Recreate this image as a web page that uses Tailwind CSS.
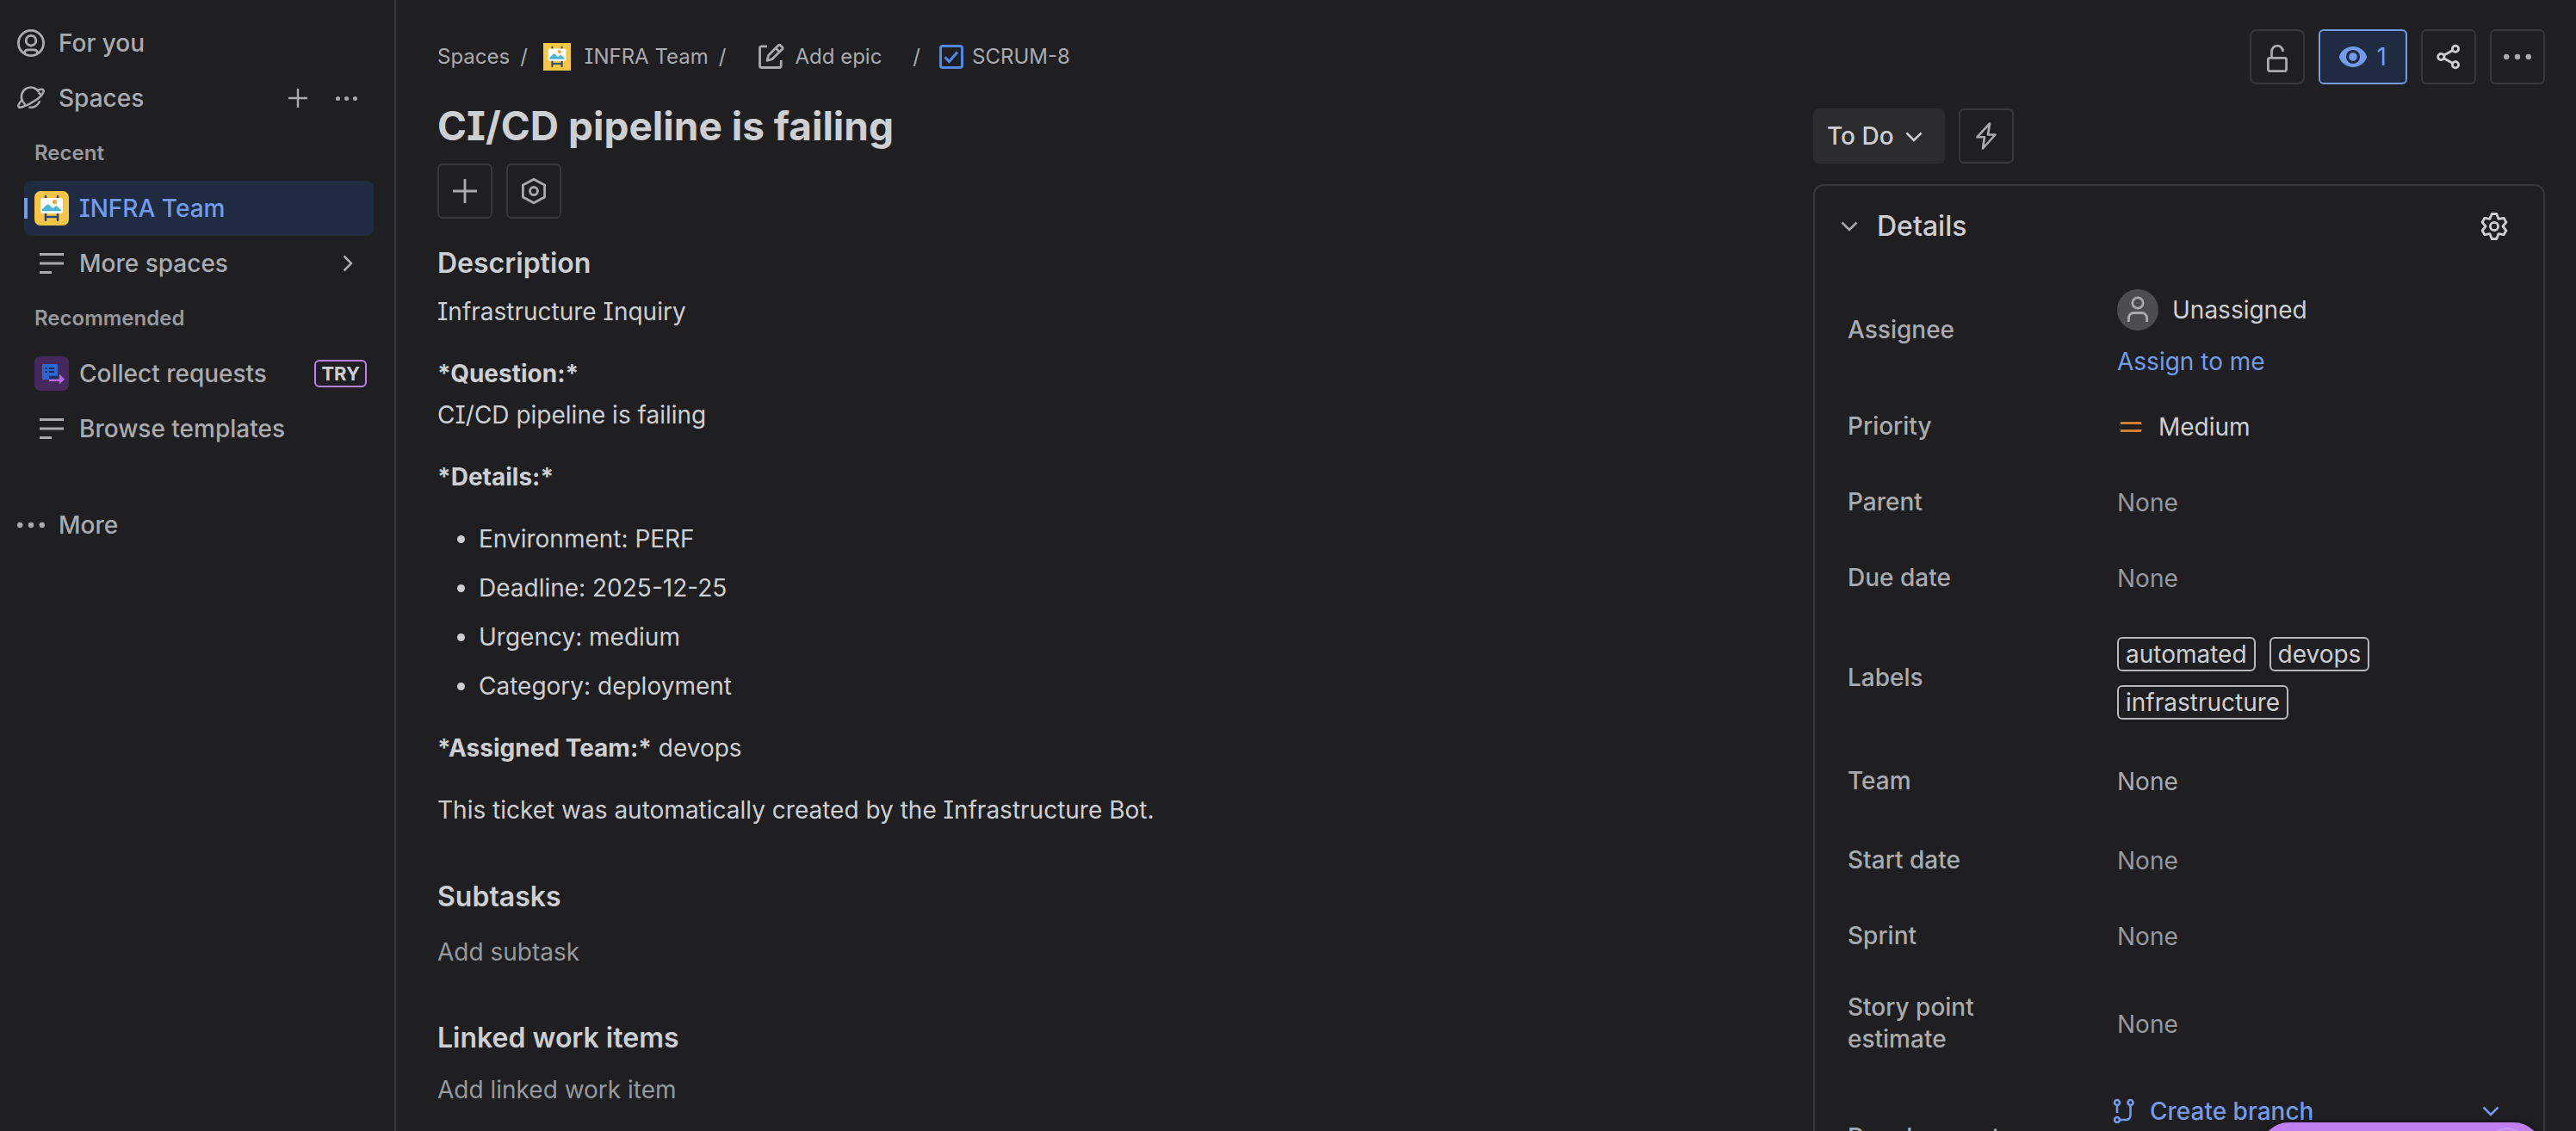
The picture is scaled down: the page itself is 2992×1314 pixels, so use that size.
<!DOCTYPE html>
<html lang="en">
<head>
    <meta charset="UTF-8">
    <meta name="viewport" content="width=device-width, initial-scale=1.0">
    <title>SCRUM-8 CI/CD pipeline is failing</title>
    <script src="https://cdn.jsdelivr.net/npm/@tailwindcss/browser@4"></script>
    <style>
        body {
            font-family: Inter, 'Liberation Sans', sans-serif;
            font-feature-settings: 'cv08';
        }
    </style>
</head>
<body class="flex h-screen overflow-hidden bg-[#1f1f21] text-[28px] leading-10 text-[#cecfd2]">

    <!-- Shared icons -->
    <svg class="hidden" aria-hidden="true">
        <symbol id="infra" viewBox="0 0 40 40">
            <rect width="40" height="40" fill="#f8c645"/>
            <path d="M13 6v4M27 6v4M13 24v10M27 24v10M13 30h14" stroke="#2c4a7c" stroke-width="2.6" stroke-linecap="round"/>
            <rect x="7" y="8" width="26" height="18" rx="2.5" fill="#fff"/>
            <circle cx="23.5" cy="12.6" r="2.6" fill="#f6a637"/>
            <path d="M9 23.3v-2.2l5.6-5.3c.7-.7 1.5-.7 2.2 0l4.7 4.5 2.6-2.6c.6-.6 1.5-.6 2.1 0l4.8 4.4v1.2z" fill="#4db5d8"/>
        </symbol>
        <symbol id="dots" viewBox="0 0 32 32">
            <g fill="currentColor"><circle cx="3.2" cy="16" r="3.2"/><circle cx="16" cy="16" r="3.2"/><circle cx="28.8" cy="16" r="3.2"/></g>
        </symbol>
        <symbol id="lines" viewBox="0 0 28 24">
            <path d="M0 1.5h28M0 12h28M0 22.5h14" stroke="currentColor" stroke-width="3"/>
        </symbol>
        <symbol id="chevron" viewBox="0 0 20 12">
            <path d="M1.5 1.5 10 10l8.5-8.5" fill="none" stroke="currentColor" stroke-width="2.5"/>
        </symbol>
    </svg>

    <!-- Sidebar -->
    <nav class="w-[460px] shrink-0 border-r-2 border-[#37383a] pt-[18px] font-medium text-[#a9abaf]">
        <a href="#" class="flex h-16 items-center gap-4 pl-5">
            <svg class="size-8" viewBox="0 0 32 32" fill="none" stroke="currentColor" stroke-width="2.8"><circle cx="16" cy="16" r="14.6"/><circle cx="16" cy="13.2" r="5.8"/><path d="M8.5 28v-.5a4 4 0 0 1 4-3.6h7a4 4 0 0 1 4 3.6v.5"/></svg>
            For you
        </a>
        <div class="flex h-16 items-center pl-5 pr-8">
            <a href="#" class="flex flex-1 items-center gap-4">
                <svg class="size-8" viewBox="0 0 32 32" fill="none" stroke="currentColor" stroke-width="2.5" stroke-linejoin="round"><path d="M6.2 19.5A10.4 10.4 0 0 1 25 9"/><path d="M23.5 6.4 28.3 5.8c2-.1 2.7 1.2 2.1 3C28.5 14.5 17 22.7 6 26.3c-3.6 1.1-5.2.2-4.5-2.2.8-2.4 2.6-4.4 4.7-6.6"/><path d="M24.8 9.5 27.3 12M6.2 19.5l3 4.3"/><path d="M26.2 19.2a11 11 0 0 1-12.7 7.4"/></svg>
                Spaces
            </a>
            <button type="button" aria-label="Create space" class="flex size-12 items-center justify-center"><svg class="size-[22px]" viewBox="0 0 22 22" stroke="currentColor" stroke-width="2.4"><path d="M11 0v22M0 11h22"/></svg></button>
            <button type="button" aria-label="More actions for spaces" class="ml-2 flex size-12 items-center justify-center"><svg class="size-[25px]"><use href="#dots"/></svg></button>
        </div>
        <h2 class="flex h-16 items-center pl-10 text-2xl font-semibold text-[#96999e]">Recent</h2>
        <a href="#" aria-current="page" class="relative ml-7 mr-6 flex h-16 items-center gap-3 rounded-lg bg-[#1f2b41] pl-3 text-[#729ceb]">
            <span class="absolute left-0 top-5 h-6 w-1 bg-[#729ceb]"></span>
            <svg class="size-10 rounded-[7px]"><use href="#infra"/></svg>
            INFRA Team
        </a>
        <a href="#" class="ml-7 mr-6 flex h-16 items-center pl-[18px] pr-5">
            <svg class="h-6 w-7"><use href="#lines"/></svg>
            <span class="ml-[18px] flex-1">More spaces</span>
            <svg class="h-3 w-5 -rotate-90"><use href="#chevron"/></svg>
        </a>
        <h2 class="flex h-16 items-center pl-10 text-2xl font-semibold text-[#96999e]">Recommended</h2>
        <a href="#" class="ml-7 mr-6 flex h-16 items-center gap-3 pl-3 pr-2">
            <svg class="size-10 rounded-[7px]" viewBox="0 0 40 40"><rect width="40" height="40" fill="#46285c"/><path d="M9 9h18v18H9z" fill="#2e67d3"/><path d="M17 22.8h10V27H17z" fill="#1c2f5c"/><path d="M12.5 14h2.4M17 14h6M12.5 18h2.4M17 18h6" stroke="#1c2f5c" stroke-width="2"/><path d="M17 26.5h12v-6l6 6.2-6 5.8V29H17z" fill="#b669f0"/></svg>
            <span class="flex-1">Collect requests</span>
            <span class="flex h-8 items-center rounded-md border-2 border-[#bf7ff0] px-[6px] text-[22px] font-bold text-[#cecfd2]">TRY</span>
        </a>
        <a href="#" class="ml-7 mr-6 flex h-16 items-center pl-[18px]">
            <svg class="h-6 w-7"><use href="#lines"/></svg>
            <span class="ml-[18px]">Browse templates</span>
        </a>
        <a href="#" class="mt-12 flex h-16 items-center gap-4 pl-5">
            <svg class="size-8"><use href="#dots"/></svg>
            More
        </a>
    </nav>

    <main class="flex h-full min-w-0 flex-1 flex-col overflow-hidden pl-12 pr-9 pt-[34px]">
        <header class="flex h-16 shrink-0 items-center justify-between">
            <!-- Breadcrumbs -->
            <nav aria-label="Breadcrumbs" class="flex items-center text-2xl text-[#a9abaf]">
                <a href="#">Spaces</a>
                <span class="mx-3">/</span>
                <a href="#" class="ml-[6px] flex items-center gap-4">
                    <svg class="size-8"><use href="#infra"/></svg>
                    INFRA Team
                </a>
                <span class="mx-3">/</span>
                <button type="button" class="ml-6 flex items-center gap-3">
                    <svg class="size-8" viewBox="0 0 32 32" fill="none" stroke="currentColor" stroke-width="2.8" stroke-linejoin="round"><path d="M12 3.8H5.5a2 2 0 0 0-2 2v20.7a2 2 0 0 0 2 2h20.7a2 2 0 0 0 2-2V20"/><path d="m12 20.3 1.5-5.8L25 2.8q1.3-1.2 2.6 0l1.9 1.9q1.3 1.3 0 2.6L18 18.6zM22 6l4.3 4.3"/></svg>
                    Add epic
                </button>
                <span class="ml-9 mr-[22px]">/</span>
                <a href="#" class="flex items-center gap-[10px]">
                    <svg class="size-7" viewBox="0 0 28 28" fill="none" stroke="#5089ec" stroke-width="3"><rect x="1.5" y="1.5" width="25" height="25" rx="2.5"/><path d="m6.5 14.5 5 5L21 8.5"/></svg>
                    SCRUM-8
                </a>
            </nav>
            <div class="flex gap-4">
                <button type="button" aria-label="No restrictions" class="flex size-16 items-center justify-center rounded-lg border-2 border-[#37383a] text-[#a9abaf]"><svg class="size-9" viewBox="0 0 36 36" fill="none" stroke="currentColor" stroke-width="2.8"><rect x="7.4" y="19.4" width="21.2" height="15.2" rx="2"/><path d="M11.5 19v-7.2a6.5 6.5 0 0 1 13-.2v.4"/></svg></button>
                <button type="button" aria-label="Watch options" class="flex h-16 items-center gap-3 rounded-md border-2 border-[#729ceb] bg-[#1f2b41] px-[22px] text-[#729ceb]"><svg class="size-8" viewBox="0 0 32 32"><path d="M16 4C8 4 2.5 9.3.4 14.2a4.4 4.4 0 0 0 0 3.6C2.5 22.7 8 28 16 28s13.5-5.3 15.6-10.2a4.4 4.4 0 0 0 0-3.6C29.5 9.3 24 4 16 4z" fill="currentColor"/><circle cx="16" cy="16" r="8" fill="#1f2b41"/><circle cx="16" cy="16" r="4.8" fill="currentColor"/></svg>1</button>
                <button type="button" aria-label="Share" class="flex size-16 items-center justify-center rounded-md border-2 border-[#37383a]"><svg class="size-8" viewBox="0 0 32 32" fill="none" stroke="currentColor" stroke-width="2.8"><circle cx="7.3" cy="16" r="3.6"/><circle cx="24" cy="6.7" r="3.6"/><circle cx="24" cy="25.3" r="3.6"/><path d="m10.5 14.2 10.3-5.7M10.5 17.8l10.3 5.7"/></svg></button>
                <button type="button" aria-label="Actions" class="flex size-16 items-center justify-center rounded-md border-2 border-[#37383a] text-[#a9abaf]"><svg class="size-8"><use href="#dots"/></svg></button>
            </div>
        </header>

        <div class="flex flex-1 justify-between">
            <!-- Work item content -->
            <article class="min-w-0 flex-1 pt-5">
                <h1 class="text-[46px] leading-14 font-[650]">CI/CD pipeline is failing</h1>
                <div class="mt-4 flex gap-4 text-[#a9abaf]">
                    <button type="button" aria-label="Add" class="flex size-16 items-center justify-center rounded-md border-2 border-[#37383a]"><svg class="size-7" viewBox="0 0 28 28" stroke="currentColor" stroke-width="2.8"><path d="M14 0v28M0 14h28"/></svg></button>
                    <button type="button" aria-label="Apps" class="flex size-16 items-center justify-center rounded-md border-2 border-[#37383a]"><svg class="size-8" viewBox="0 0 32 32" fill="none" stroke="currentColor" stroke-width="2.8" stroke-linejoin="round"><path d="M16 2.2 28.6 9v14L16 29.8 3.4 23V9z"/><circle cx="16" cy="16" r="4.5"/></svg></button>
                </div>

                <h2 class="mt-8 text-[32px] font-semibold">Description</h2>
                <div class="mt-3 flex flex-col gap-6 leading-12">
                    <p>Infrastructure Inquiry</p>
                    <p><strong class="font-[650]">*Question:*</strong><br>CI/CD pipeline is failing</p>
                    <p><strong class="font-[650]">*Details:*</strong></p>
                    <ul class="flex list-disc flex-col gap-[9px] pl-12">
                        <li>Environment: PERF</li>
                        <li>Deadline: 2025-12-25</li>
                        <li>Urgency: medium</li>
                        <li>Category: deployment</li>
                    </ul>
                    <p><strong class="font-[650]">*Assigned Team:*</strong> devops</p>
                    <p>This ticket was automatically created by the Infrastructure Bot.</p>
                </div>

                <h2 class="mt-[57px] text-[32px] font-semibold">Subtasks</h2>
                <button type="button" class="mt-6 block text-[#96999e]">Add subtask</button>

                <h2 class="mt-[60px] text-[32px] font-semibold">Linked work items</h2>
                <button type="button" class="mt-5 block text-[#96999e]">Add linked work item</button>
            </article>

            <!-- Status and details -->
            <aside class="flex w-[850px] shrink-0 flex-col pt-7">
                <div class="flex gap-4">
                    <div class="relative">
                        <select aria-label="Status" class="h-16 w-[153px] appearance-none rounded-md bg-[#2c2c2e] pl-4 font-medium">
                            <option>To Do</option>
                        </select>
                        <svg class="pointer-events-none absolute right-[26px] top-[27px] h-3 w-5"><use href="#chevron"/></svg>
                    </div>
                    <button type="button" aria-label="Automation" class="flex size-16 items-center justify-center rounded-md border-2 border-[#37383a] text-[#a9abaf]"><svg class="size-8" viewBox="0 0 32 32" fill="none" stroke="currentColor" stroke-width="2.6" stroke-linejoin="round"><path d="M20 1.5 5.5 17.2H14L12 30.5l14.5-16H18z"/></svg></button>
                </div>

                <section class="mt-6 rounded-xl border-2 border-[#37383a] pl-[38px] pr-[41px]">
                    <div class="-ml-2 flex h-[99px] items-center pb-[6px]">
                        <svg class="h-3 w-5 text-[#a9abaf]"><use href="#chevron"/></svg>
                        <h2 class="ml-[22px] flex-1 text-[32px] font-medium">Details</h2>
                        <button type="button" aria-label="Configure"><svg class="size-8" viewBox="0 0 32 32" fill="none" stroke="currentColor" stroke-width="2.8" stroke-linejoin="round"><path d="M13.2 1.5h5.6L21 7.3l6.1-1 2.8 4.9L26 16l3.9 4.8-2.8 4.9-6.1-1-2.2 5.8h-5.6L11 24.7l-6.1 1-2.8-4.9L6 16l-3.9-4.8 2.8-4.9 6.1 1z"/><circle cx="16" cy="16" r="4.6"/></svg></button>
                    </div>
                    <dl class="[&_dd]:pt-[2px] [&_dt]:w-[200px] [&_dt]:leading-[37px] [&_dt]:font-medium [&_dt]:text-[#a9abaf] [&>div]:grid [&>div]:grid-cols-[313px_1fr] [&>div]:items-center">
                        <div class="h-[136px]">
                            <dt>Assignee</dt>
                            <dd>
                                <div class="flex items-center gap-4 pt-2">
                                    <svg class="size-12" viewBox="0 0 48 48" fill="none" stroke="#a9abaf" stroke-width="2.8"><circle cx="24" cy="24" r="24" fill="#4b4d51" stroke="none"/><circle cx="24" cy="16" r="6.2"/><path d="M13.4 38v-4.5a6 6 0 0 1 6-6h9.2a6 6 0 0 1 6 6V38"/></svg>
                                    Unassigned
                                </div>
                                <a href="#" class="mt-4 block text-[#729ceb]">Assign to me</a>
                            </dd>
                        </div>
                        <div class="h-[88px]">
                            <dt>Priority</dt>
                            <dd class="flex items-center gap-5"><svg class="ml-1 h-3 w-6" viewBox="0 0 24 12" stroke="#d97d2e" stroke-width="3"><path d="M0 1.5h24M0 10.5h24"/></svg>Medium</dd>
                        </div>
                        <div class="h-[88px]"><dt>Parent</dt><dd class="text-[#96999e]">None</dd></div>
                        <div class="h-[88px]"><dt>Due date</dt><dd class="text-[#96999e]">None</dd></div>
                        <div class="h-[144px]">
                            <dt>Labels</dt>
                            <dd class="flex w-[320px] flex-wrap gap-4">
                                <a href="#" class="rounded-md border-2 border-[#b7b9be] px-2 leading-9">automated</a>
                                <a href="#" class="rounded-md border-2 border-[#b7b9be] px-2 leading-9">devops</a>
                                <a href="#" class="rounded-md border-2 border-[#b7b9be] px-2 leading-9">infrastructure</a>
                            </dd>
                        </div>
                        <div class="h-[96px]"><dt>Team</dt><dd class="text-[#a9abaf]">None</dd></div>
                        <div class="h-[88px]"><dt>Start date</dt><dd class="text-[#96999e]">None</dd></div>
                        <div class="h-[88px]"><dt>Sprint</dt><dd class="text-[#96999e]">None</dd></div>
                        <div class="h-[115px]"><dt>Story point estimate</dt><dd class="text-[#96999e]">None</dd></div>
                        <div class="h-[150px]">
                            <dt>Development</dt>
                            <dd class="-ml-2 mt-[23px] self-start font-medium text-[#729ceb]">
                                <button type="button" class="flex w-full items-center">
                                    <svg class="size-8" viewBox="0 0 32 32" fill="none" stroke="currentColor" stroke-width="2.6"><circle cx="8" cy="6" r="3"/><circle cx="23.5" cy="6" r="3"/><circle cx="8" cy="26" r="3"/><path d="M8 9v9M23.5 9v12a5 5 0 0 1-5 5H11"/></svg>
                                    <span class="ml-[14px] flex-1 text-left">Create branch</span>
                                    <svg class="mr-[10px] h-3 w-5"><use href="#chevron"/></svg>
                                </button>
                            </dd>
                        </div>
                    </dl>
                </section>
            </aside>
        </div>
    </main>

    <!-- Floating quickstart button -->
    <button type="button" aria-label="Quickstart" class="fixed -bottom-[54px] right-10 flex h-16 w-[326px] items-start justify-end rounded-full bg-[#bf7fee] pr-4 pt-[6px] shadow-[0_0_6px_#0008]">
        <span class="size-12 rounded-full border-2 border-[#cb98f1]"></span>
    </button>

</body>
</html>
